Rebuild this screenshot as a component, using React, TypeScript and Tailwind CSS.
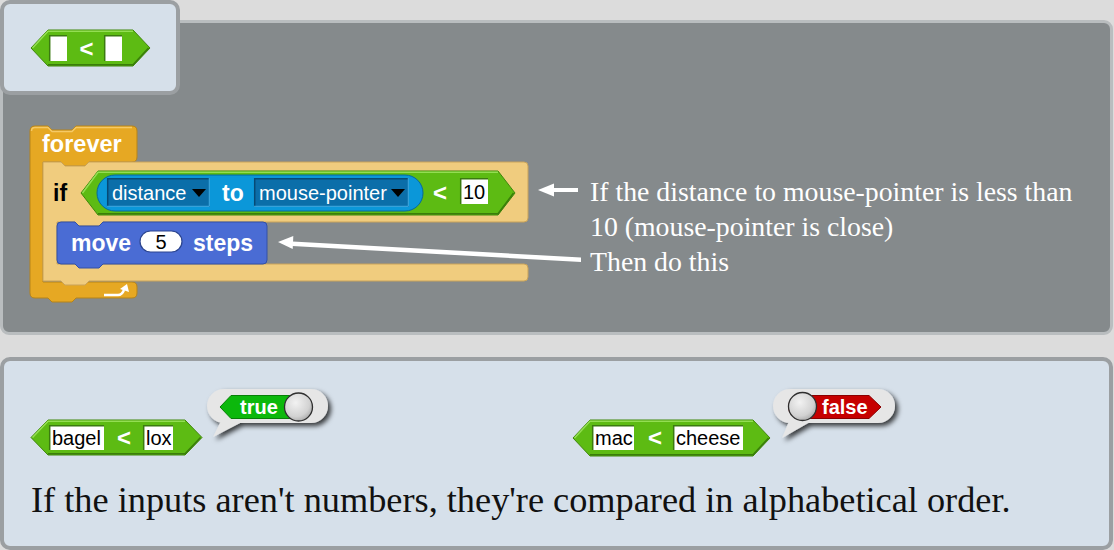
import React from "react";

// predicate (hexagon) outline
function hexPath(x1: number, y1: number, x2: number, y2: number, i: number) {
  const m = (y1 + y2) / 2;
  return `M${x1} ${m} L${x1 + i} ${y1} L${x2 - i} ${y1} L${x2} ${m} L${x2 - i} ${y2} L${x1 + i} ${y2} Z`;
}

type HexProps = { x1: number; y1: number; x2: number; y2: number; i: number };

function GreenHex({ x1, y1, x2, y2, i }: HexProps) {
  const m = (y1 + y2) / 2;
  return (
    <g>
      <path d={hexPath(x1, y1, x2, y2, i)} fill="#5dbb13" stroke="#3f870b" strokeWidth={1} />
      <path
        d={`M${x1 + 1.5} ${m} L${x1 + i} ${y1 + 1.2} L${x2 - i} ${y1 + 1.2}`}
        stroke="#93de52"
        strokeWidth={1.5}
        fill="none"
      />
      <path
        d={`M${x1 + i} ${y2 - 1.2} L${x2 - i} ${y2 - 1.2} L${x2 - 1.5} ${m}`}
        stroke="#3a7d0a"
        strokeWidth={1.5}
        fill="none"
      />
    </g>
  );
}

function Slot({ x, y, w, h, text }: { x: number; y: number; w: number; h: number; text?: string }) {
  return (
    <g>
      <rect x={x} y={y} width={w} height={h} fill="#fff" />
      <path d={`M${x + 0.7} ${y + h} L${x + 0.7} ${y + 0.7} L${x + w} ${y + 0.7}`} stroke="#3b7a10" strokeWidth={1.5} fill="none" />
      {text && (
        <text x={x + 3} y={y + h / 2 + 7} fontSize={20} fill="#000">
          {text}
        </text>
      )}
    </g>
  );
}

function Knob({ cx, cy }: { cx: number; cy: number }) {
  return (
    <g>
      <circle cx={cx} cy={cy} r={14} fill="url(#knob)" stroke="#2e2e2e" strokeWidth={1.3} />
    </g>
  );
}

function Dropdown({ x, w, text }: { x: number; w: number; text: string }) {
  const y = 178;
  const h = 29;
  return (
    <g>
      <rect x={x} y={y} width={w} height={h} fill="#0b6ea9" />
      <path d={`M${x + 0.7} ${y + h} L${x + 0.7} ${y + 0.7} L${x + w} ${y + 0.7}`} stroke="#064a75" strokeWidth={1.5} fill="none" />
      <path d={`M${x + w - 0.7} ${y} L${x + w - 0.7} ${y + h - 0.7} L${x} ${y + h - 0.7}`} stroke="#41aee6" strokeWidth={1} fill="none" />
      <text x={x + 5} y={200} fontSize={20} fill="#fff">
        {text}
      </text>
      <path d={`M${x + w - 18} ${189} L${x + w - 4} ${189} L${x + w - 11} ${197} Z`} fill="#000" />
    </g>
  );
}

function Script() {
  return (
    <svg width="587" height="290" viewBox="3 23 587 290" className="shrink-0">
      {/* forever */}
      <path
        d="M30 131 Q30 126 35 126 L48 126 L52 130 L72 130 L76 126 L132 126 Q137 126 137 131 L137 157 Q137 162 132 162 L89 162 L85 166 L65 166 L61 162 L43 162 L43 282 L132 282 Q137 282 137 287 L137 293 Q137 298 132 298 L76 298 L72 302 L52 302 L48 298 L35 298 Q30 298 30 293 Z"
        fill="#e6a823"
        stroke="#b5831a"
        strokeWidth={1}
      />
      <path d="M31.5 131 Q31.5 127.5 35 127.5 L48 127.5 L52 131.5 L72 131.5 L76 127.5 L132 127.5" stroke="#f6c965" strokeWidth={1.5} fill="none" />
      <text x={42} y={152} fontSize={23.5} fontWeight={700} fill="#fff">
        forever
      </text>
      <path d="M104 295 L118 295 Q122 295 124 290" stroke="#fff" strokeWidth={2.5} fill="none" />
      <path d="M120 289 L127 284 L129 292 Z" fill="#fff" />

      {/* if */}
      <path
        d="M43 162 L61 162 L65 166 L85 166 L89 162 L524 162 Q528 162 528 166 L528 218 Q528 222 524 222 L103 222 L99 226 L79 226 L75 222 L57 222 L57 264 L524 264 Q528 264 528 268 L528 277 Q528 281 524 281 L89 281 L85 285 L65 285 L61 281 L43 281 Z"
        fill="#f0cc7e"
        stroke="#c9a35a"
        strokeWidth={1}
      />
      <text x={53} y={201} fontSize={23} fontWeight={700} fill="#000">
        if
      </text>
      <GreenHex x1={81} y1={171} x2={515} y2={215} i={17} />
      <rect x={97} y={175} width={326} height={36} rx={18} fill="#0b97d9" stroke="#07699c" strokeWidth={1} />
      <Dropdown x={107} w={103} text="distance" />
      <text x={222} y={201} fontSize={23} fontWeight={700} fill="#fff">
        to
      </text>
      <Dropdown x={254} w={155} text="mouse-pointer" />
      <text x={433} y={201} fontSize={24} fontWeight={700} fill="#fff">
        &lt;
      </text>
      <rect x={460} y={178} width={28} height={26} fill="#fff" />
      <path d="M460.7 204 L460.7 178.7 L488 178.7" stroke="#3b7a10" strokeWidth={1.5} fill="none" />
      <text x={463} y={199} fontSize={20} fill="#000">
        10
      </text>

      {/* move */}
      <path
        d="M57 226 Q57 222 61 222 L75 222 L79 226 L99 226 L103 222 L263 222 Q267 222 267 226 L267 260 Q267 264 263 264 L103 264 L99 268 L79 268 L75 264 L61 264 Q57 264 57 260 Z"
        fill="#4a6cd4"
        stroke="#3250a6"
        strokeWidth={1}
      />
      <text x={71} y={251} fontSize={23} fontWeight={700} fill="#fff">
        move
      </text>
      <rect x={140} y={231} width={42} height={21} rx={10.5} fill="#fff" stroke="#2c458f" strokeWidth={1.2} />
      <text x={161} y={249} fontSize={20} fill="#000" textAnchor="middle">
        5
      </text>
      <text x={193} y={251} fontSize={23} fontWeight={700} fill="#fff">
        steps
      </text>

      {/* arrows */}
      <line x1={578} y1={190} x2={552} y2={190} stroke="#fff" strokeWidth={4} />
      <path d="M538 190 L554 183.5 L554 196.5 Z" fill="#fff" />
      <path d="M581 257.5 L581 262 L292 246 L292.5 241.5 Z" fill="#fff" />
      <path d="M278 242 L293.3 236 L292.7 249 Z" fill="#fff" />
    </svg>
  );
}

function Bubble({ x1, x2, tail, children }: { x1: number; x2: number; tail: string; children: React.ReactNode }) {
  return (
    <g>
      <g filter="url(#shadow)">
        <rect x={x1} y={389} width={x2 - x1} height={34} rx={17} fill="#e6e6e6" />
        <path d={tail} fill="#e6e6e6" />
      </g>
      {children}
    </g>
  );
}

function Examples() {
  return (
    <svg width="1105" height="109" viewBox="4 361 1105 109" className="block">
      <defs>
        <filter id="shadow" x="-20%" y="-30%" width="140%" height="170%">
          <feDropShadow dx="3" dy="3" stdDeviation="2.5" floodColor="#000" floodOpacity="0.75" />
        </filter>
        <radialGradient id="knob" cx="0.4" cy="0.35" r="0.7">
          <stop offset="0" stopColor="#f2f2f2" />
          <stop offset="0.7" stopColor="#d2d2d2" />
          <stop offset="1" stopColor="#a8a8a8" />
        </radialGradient>
      </defs>

      {/* bagel < lox */}
      <GreenHex x1={31} y1={420} x2={202} y2={455} i={17} />
      <Slot x={49} y={425} w={55} h={25} text="bagel" />
      <text x={124} y={446} fontSize={24} fontWeight={700} fill="#fff" textAnchor="middle">
        &lt;
      </text>
      <Slot x={143} y={425} w={30} h={25} text="lox" />

      <Bubble x1={207} x2={328} tail="M222 419 L213 437 L242 422 Z">
        <path d="M220 407 L231 395.5 L300 395.5 A11.5 11.5 0 0 1 300 418.5 L231 418.5 Z" fill="#0cb80c" stroke="#078007" strokeWidth={1} />
        <text x={240} y={414} fontSize={20} fontWeight={700} fill="#fff">
          true
        </text>
        <Knob cx={298.5} cy={407} />
      </Bubble>

      {/* mac < cheese */}
      <GreenHex x1={573} y1={420} x2={770} y2={456} i={17} />
      <Slot x={592} y={425} w={42} h={25} text="mac" />
      <text x={655} y={446} fontSize={24} fontWeight={700} fill="#fff" textAnchor="middle">
        &lt;
      </text>
      <Slot x={673} y={425} w={70} h={25} text="cheese" />

      <Bubble x1={773} x2={895} tail="M790 419 L782 438 L810 422 Z">
        <path d="M800 395.5 L869 395.5 L881 407 L869 418.5 L800 418.5 A11.5 11.5 0 0 1 800 395.5 Z" fill="#c60000" stroke="#8a0000" strokeWidth={1} />
        <text x={822} y={414} fontSize={20} fontWeight={700} fill="#fff">
          false
        </text>
        <Knob cx={802.5} cy={406.5} />
      </Bubble>
    </svg>
  );
}

export default function App() {
  return (
    <div className="relative w-[1114px] h-[550px] overflow-hidden bg-[#dcdcdc] font-['Liberation_Sans',Arial,sans-serif]">
      {/* palette tab over the script panel */}
      <div className="absolute left-0 top-0 z-10 w-[180px] h-[95px] rounded-[10px] border-4 border-[#9b9fa2] bg-[#d6e0ea]">
        <svg width="172" height="87" viewBox="4 4 172 87" className="block">
          <GreenHex x1={31} y1={30} x2={150} y2={66} i={17} />
          <Slot x={49} y={35} w={18} h={26} />
          <text x={86.5} y={57} fontSize={24} fontWeight={700} fill="#fff" textAnchor="middle">
            &lt;
          </text>
          <Slot x={104} y={35} w={18} h={26} />
        </svg>
      </div>

      <div className="pt-[20px]">
        <div className="flex w-[1113px] h-[315px] rounded-[9px] border-[3px] border-[#b9bdbf] bg-[#858a8c]">
          <Script />
          <div className="mt-[151px] whitespace-nowrap font-['Liberation_Serif','Times_New_Roman',serif] text-[27.8px] leading-[35px] text-white">
            If the distance to mouse-pointer is less than
            <br />
            10 (mouse-pointer is close)
            <br />
            Then do this
          </div>
        </div>
      </div>

      <div className="mt-[22px] w-[1113px] h-[193px] rounded-[10px] border-4 border-[#9b9fa2] bg-[#d6e0ea]">
        <Examples />
        <p className="mt-[10px] pl-[27px] whitespace-nowrap font-['Liberation_Serif','Times_New_Roman',serif] text-[36.3px] leading-[40px] text-[#111]">
          If the inputs aren't numbers, they're compared in alphabetical order.
        </p>
      </div>
    </div>
  );
}
